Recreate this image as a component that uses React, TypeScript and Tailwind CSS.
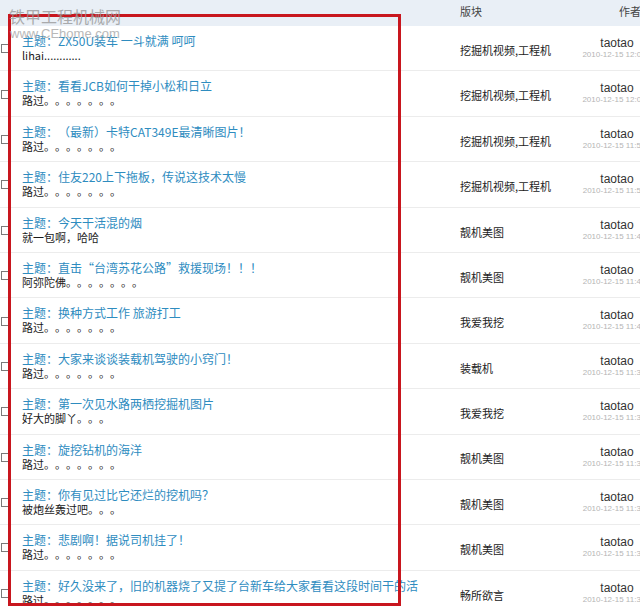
import React from "react";

const rows = [
  { t: "主题：ZX50U装车 一斗就满 呵呵", s: "lihai............", b: "挖掘机视频,工程机", d: "2010-12-15 12:05" },
  { t: "主题：看看JCB如何干掉小松和日立", s: "路过。。。。。。。", b: "挖掘机视频,工程机", d: "2010-12-15 12:02" },
  { t: "主题：（最新）卡特CAT349E最清晰图片！", s: "路过。。。。。。。", b: "挖掘机视频,工程机", d: "2010-12-15 11:56" },
  { t: "主题：住友220上下拖板，传说这技术太慢", s: "路过。。。。。。。", b: "挖掘机视频,工程机", d: "2010-12-15 11:55" },
  { t: "主题：今天干活混的烟", s: "就一包啊，哈哈", b: "靓机美图", d: "2010-12-15 11:44" },
  { t: "主题：直击“台湾苏花公路”救援现场！！！", s: "阿弥陀佛。。。。。。。", b: "靓机美图", d: "2010-12-15 11:43" },
  { t: "主题：换种方式工作 旅游打工", s: "路过。。。。。。。", b: "我爱我挖", d: "2010-12-15 11:40" },
  { t: "主题：大家来谈谈装载机驾驶的小窍门！", s: "路过。。。。。。。", b: "装载机", d: "2010-12-15 11:37" },
  { t: "主题：第一次见水路两栖挖掘机图片", s: "好大的脚丫。。。", b: "我爱我挖", d: "2010-12-15 11:36" },
  { t: "主题：旋挖钻机的海洋", s: "路过。。。。。。。", b: "靓机美图", d: "2010-12-15 11:35" },
  { t: "主题：你有见过比它还烂的挖机吗？", s: "被炮丝轰过吧。。。", b: "靓机美图", d: "2010-12-15 11:34" },
  { t: "主题：悲剧啊！据说司机挂了！", s: "路过。。。。。。。", b: "靓机美图", d: "2010-12-15 11:31" },
  { t: "主题：好久没来了，旧的机器烧了又提了台新车给大家看看这段时间干的活", s: "路过。。。。。。。", b: "畅所欲言", d: "2010-12-15 11:30" },
];

const cjk = "font-['Microsoft_YaHei','Noto_Sans_CJK_SC',sans-serif] [text-spacing-trim:space-all]";

export default function App() {
  return (
    <div className={`relative w-[640px] h-[606px] overflow-hidden bg-white ${cjk}`}>
      <div className="w-[654px]">
        <div className="grid grid-cols-[22px_438px_120px_74px] h-[26px] bg-[#e9eff6] items-center text-[11px] text-[#444]">
          <div />
          <div />
          <div className="leading-[14px] -mt-[4px]">版块</div>
          <div className="leading-[14px] -mt-[4px] pl-[39px]">作者</div>
        </div>
        {rows.map((r, i) => (
          <div
            key={i}
            className="grid grid-cols-[22px_438px_120px_74px] h-[45.4px] border-b border-[#ececec] bg-white"
          >
            <div className="flex items-center">
              <div className="ml-[1px] mt-[1px] w-[9px] h-[9px] border border-[#7a7a7a] bg-white" />
            </div>
            <div className="pt-[7px] overflow-hidden whitespace-nowrap">
              <div className="text-[12px] leading-[15px] text-[#2e8cbf]">{r.t}</div>
              <div className="text-[11px] leading-[15px] text-[#1a1a1a]">{r.s}</div>
            </div>
            <div className="flex items-center pt-[4px] text-[11px] text-[#222] whitespace-nowrap">{r.b}</div>
            <div className="flex flex-col items-center pt-[11px]">
              <div className="font-['Liberation_Sans',sans-serif] text-[12px] leading-[13px] text-[#333]">taotao</div>
              <div className="font-['Liberation_Sans',sans-serif] text-[8px] leading-[10px] text-[#b5b5b5] whitespace-nowrap -ml-[6px]">{r.d}</div>
            </div>
          </div>
        ))}
      </div>
      <div className="absolute left-[8px] top-[14px] w-[393px] h-[592px] border-[3px] border-[#c8161e] pointer-events-none" />
      <div className="absolute left-[9px] top-[6px] text-[16px] leading-[20px] text-[#9a9a9a] opacity-80 whitespace-nowrap">铁甲工程机械网</div>
      <div className="absolute left-[10px] top-[26px] font-['Liberation_Sans',sans-serif] text-[13px] leading-[16px] text-[#a8a8a8] opacity-80 whitespace-nowrap">www.CEhome.com</div>
    </div>
  );
}
